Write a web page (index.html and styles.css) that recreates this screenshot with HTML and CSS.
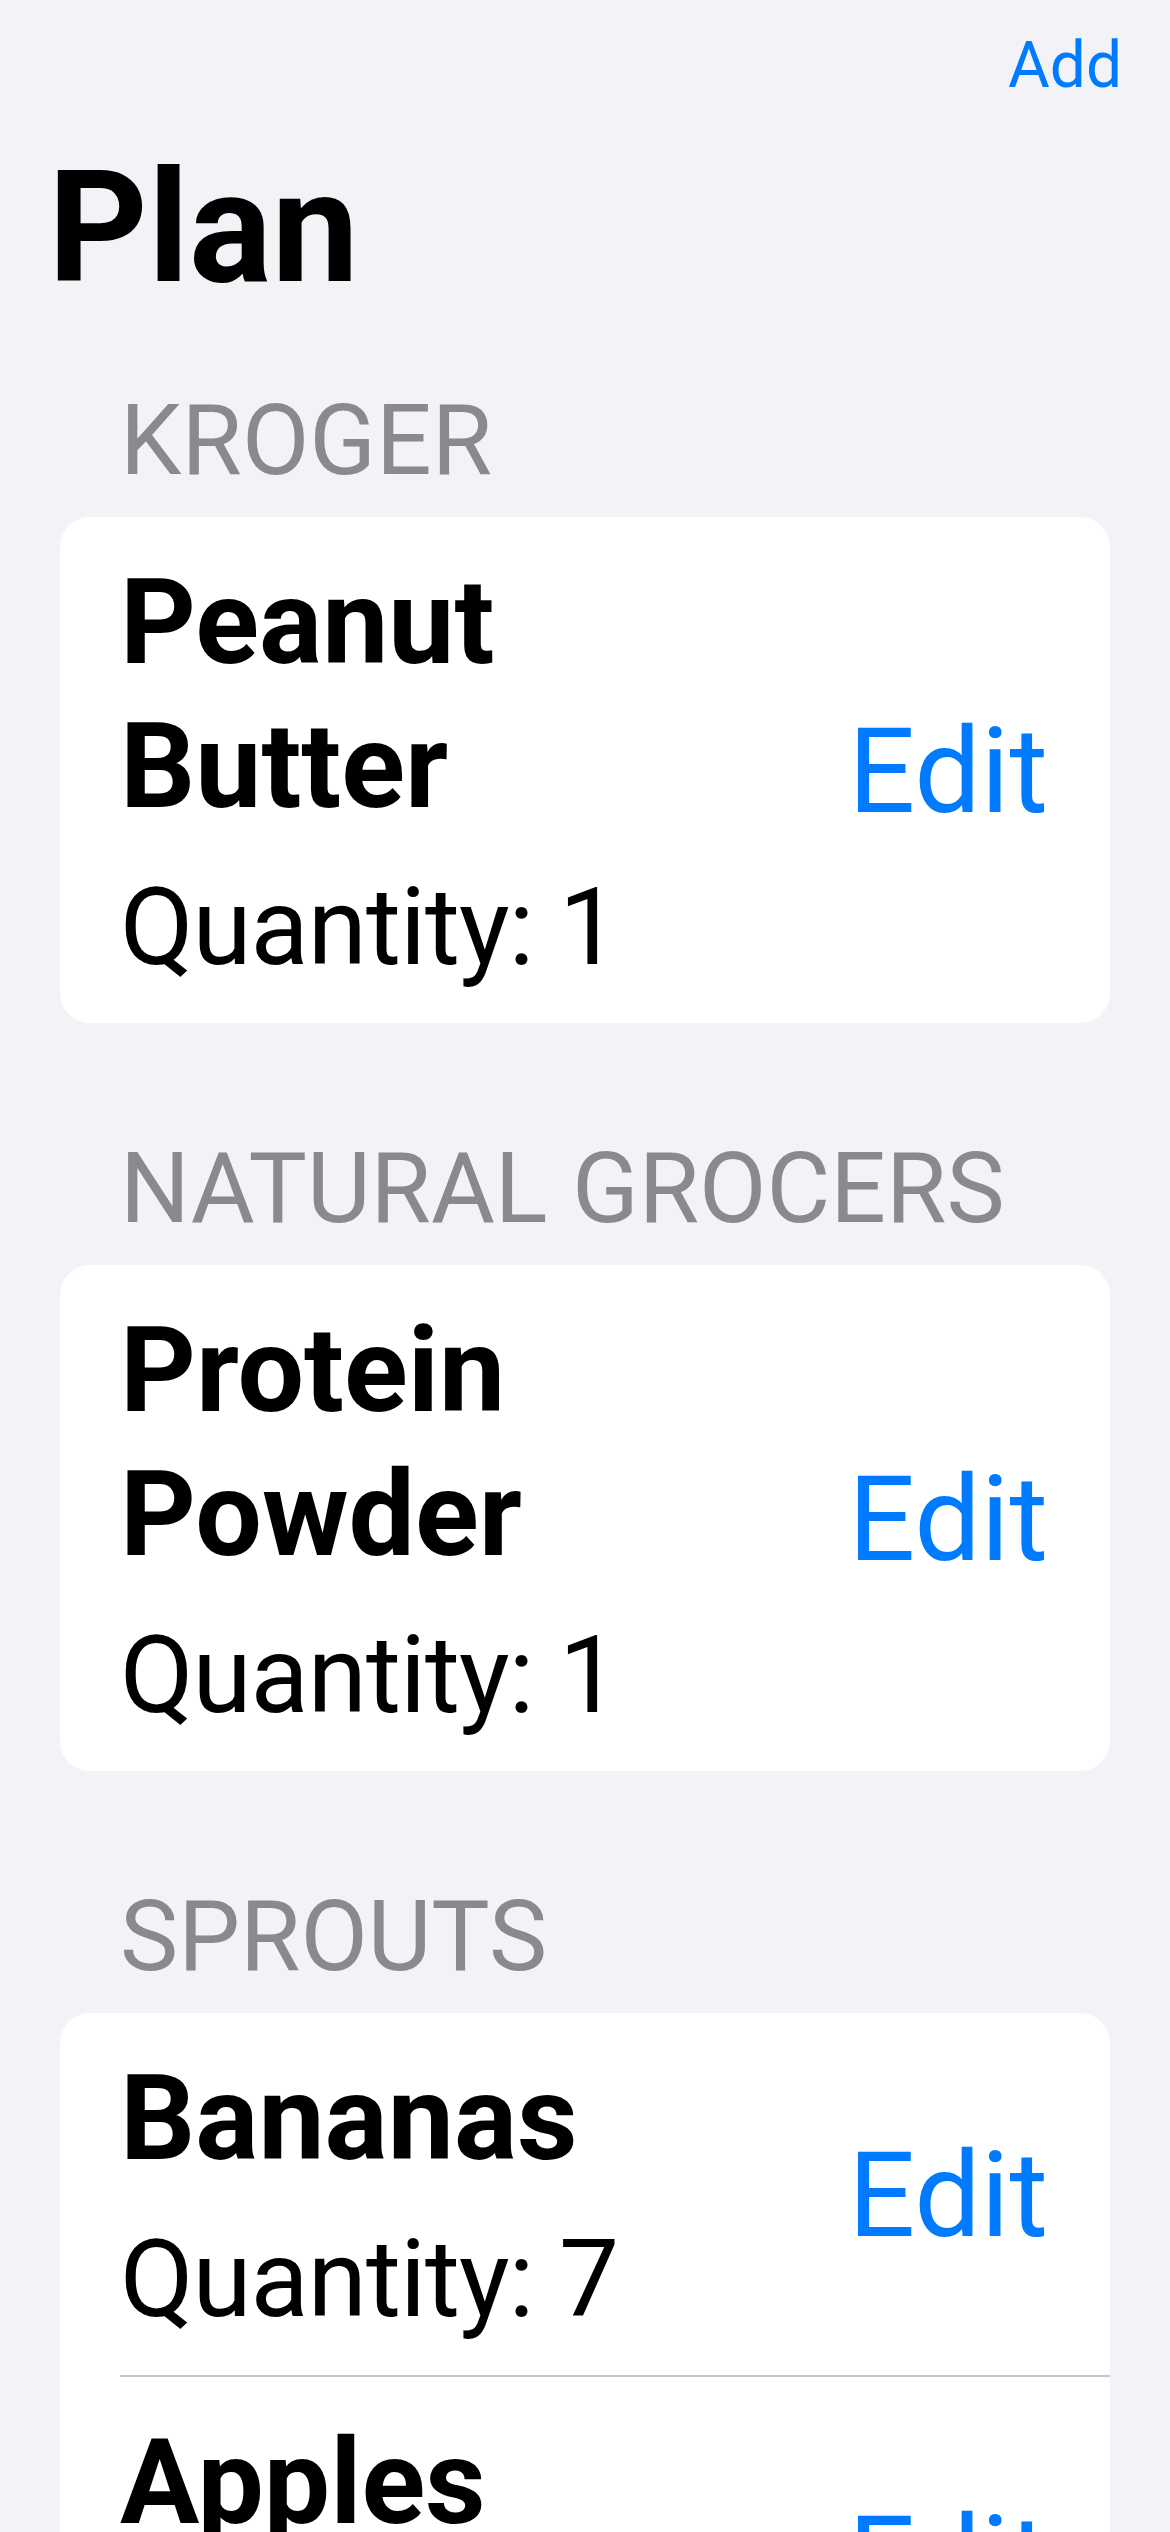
FILE: index.html
```html
<!DOCTYPE html>
<html lang="en">
<head>
<meta charset="utf-8">
<title>Plan</title>
<link rel="stylesheet" href="styles.css">
</head>
<body>
  <header class="nav">
    <button class="nav-button">Add</button>
  </header>
  <h1 class="title">Plan</h1>
  <main class="list">
    <section class="section">
      <h2 class="section-header">KROGER</h2>
      <div class="card">
        <div class="row">
          <div class="info">
            <div class="name">Peanut Butter</div>
            <div class="qty">Quantity: 1</div>
          </div>
          <button class="edit">Edit</button>
        </div>
      </div>
    </section>
    <section class="section">
      <h2 class="section-header">NATURAL GROCERS</h2>
      <div class="card">
        <div class="row">
          <div class="info">
            <div class="name">Protein Powder</div>
            <div class="qty">Quantity: 1</div>
          </div>
          <button class="edit">Edit</button>
        </div>
      </div>
    </section>
    <section class="section">
      <h2 class="section-header">SPROUTS</h2>
      <div class="card">
        <div class="row">
          <div class="info">
            <div class="name">Bananas</div>
            <div class="qty">Quantity: 7</div>
          </div>
          <button class="edit">Edit</button>
        </div>
        <div class="divider"></div>
        <div class="row">
          <div class="info">
            <div class="name">Apples</div>
            <div class="qty">Quantity: 3</div>
          </div>
          <button class="edit">Edit</button>
        </div>
      </div>
    </section>
  </main>
</body>
</html>
```
FILE: styles.css
```css
* {
  box-sizing: border-box;
}

html, body {
  margin: 0;
  padding: 0;
}

body {
  background: #f2f2f7;
  font-family: Roboto, "Liberation Sans", Arial, sans-serif;
  color: #000;
}

button {
  font-family: inherit;
  background: none;
  border: 0;
  padding: 0;
  margin: 0;
  cursor: pointer;
}

.nav {
  display: flex;
  justify-content: flex-end;
  padding: 16px 48px 0;
  height: 116px;
}

.nav-button {
  font-size: 64px;
  line-height: 100px;
  color: #007aff;
}

.title {
  margin: 22px 0 0;
  padding: 0 48px;
  font-size: 155px;
  line-height: 180px;
  font-weight: 700;
}

.section {
  padding-top: 106.5px;
}

.section:first-child {
  padding-top: 63.5px;
}

.section-header {
  margin: 0;
  padding: 0 120px;
  font-size: 98px;
  line-height: 118px;
  font-weight: 400;
  color: #8a8a8e;
}

.card {
  margin: 17.5px 60px 0;
  background: #fff;
  border-radius: 30px;
  overflow: hidden;
}

.row {
  display: flex;
  align-items: center;
  padding: 34px 62px 31px 60px;
}

.info {
  flex: 1 1 auto;
  max-width: 640px;
}

.name {
  font-size: 118px;
  line-height: 144px;
  font-weight: 700;
}

.qty {
  margin-top: 25px;
  font-size: 107px;
  line-height: 128px;
  letter-spacing: -1px;
}

.edit {
  margin-left: auto;
  font-size: 118px;
  line-height: 144px;
  color: #007aff;
}

.divider {
  height: 2px;
  margin-left: 60px;
  background: #c6c6c8;
}
```
